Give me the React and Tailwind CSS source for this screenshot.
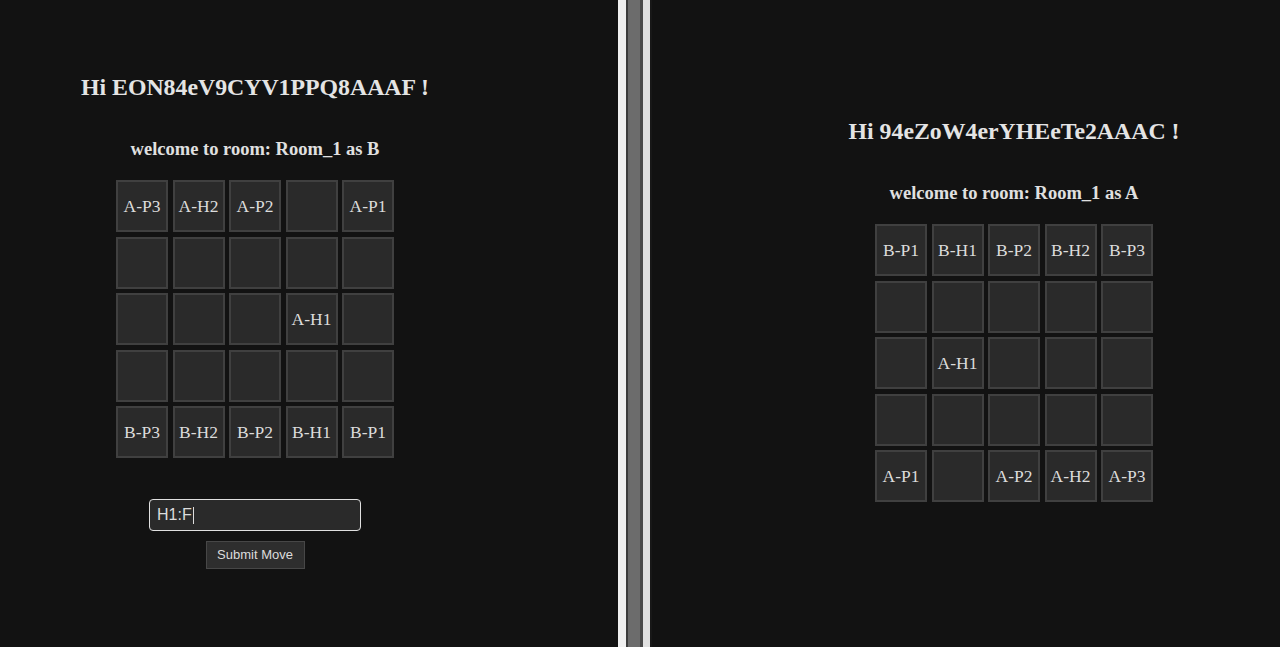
import React from 'react';

// Two game clients side by side, split by a window divider

const leftBoard = [
  ['A-P3', 'A-H2', 'A-P2', '', 'A-P1'],
  ['', '', '', '', ''],
  ['', '', '', 'A-H1', ''],
  ['', '', '', '', ''],
  ['B-P3', 'B-H2', 'B-P2', 'B-H1', 'B-P1'],
];

const rightBoard = [
  ['B-P1', 'B-H1', 'B-P2', 'B-H2', 'B-P3'],
  ['', '', '', '', ''],
  ['', 'A-H1', '', '', ''],
  ['', '', '', '', ''],
  ['A-P1', '', 'A-P2', 'A-H2', 'A-P3'],
];

const Board = ({ cells }) => (
  <div className="grid grid-cols-[repeat(5,52px)] gap-[4.5px]">
    {cells.flat().map((label, i) => (
      <div
        key={i}
        className="w-[52px] h-[52px] bg-[#2a2a2a] border-2 border-[#404040] flex items-center justify-center text-[17.5px] text-[#dcdcdc]"
      >
        {label}
      </div>
    ))}
  </div>
);

const Client = ({ name, side, cells, showMove }) => (
  <div className="flex flex-col items-center font-['Liberation_Serif',serif]">
    <div className="text-[23.8px] leading-[28px] font-bold text-[#e4e4e4]">Hi {name} !</div>
    <div className="mt-[37px] text-[18.5px] leading-[22px] font-bold text-[#e0e0e0]">
      welcome to room: Room_1 as {side}
    </div>
    <div className="mt-[20px]">
      <Board cells={cells} />
    </div>
    {showMove && (
      <div className="mt-[41px] flex flex-col items-center font-['Liberation_Sans',Arial,sans-serif]">
        <div className="w-[212px] h-[32px] rounded-[4px] border border-[#e0e0e0] bg-[#2a2a2a] px-[7px] flex items-center text-[16px] text-[#dcdcdc]">
          H1:F<span className="inline-block w-px h-[17px] bg-[#dcdcdc] ml-px" />
        </div>
        <button className="mt-[10px] w-[99px] h-[28px] bg-[#2e2e2e] border border-[#474747] text-[13px] text-[#dcdcdc]">
          Submit Move
        </button>
      </div>
    )}
  </div>
);

export default function App() {
  return (
    <div className="w-[1280px] h-[647px] flex bg-[#121212] overflow-hidden">
      <div className="w-[618px] shrink-0">
        <div className="w-[510px] pt-[73px]">
          <Client name="EON84eV9CYV1PPQ8AAAF" side="B" cells={leftBoard} showMove />
        </div>
      </div>

      {/* window divider */}
      <div className="flex shrink-0 h-full">
        <div className="w-[8px] bg-[#f0f0f0]" />
        <div className="w-[2px] bg-[#3c3c3c]" />
        <div className="w-[12px] bg-[#6c6c6c]" />
        <div className="w-[3px] bg-[#4a4a4a]" />
        <div className="w-[7px] bg-[#e0e0e0]" />
        <div className="w-[2px] bg-[#181818]" />
      </div>

      <div className="flex-1 overflow-hidden">
        <div className="w-[724px] pt-[117px]">
          <Client name="94eZoW4erYHEeTe2AAAC" side="A" cells={rightBoard} />
        </div>
      </div>
    </div>
  );
}
